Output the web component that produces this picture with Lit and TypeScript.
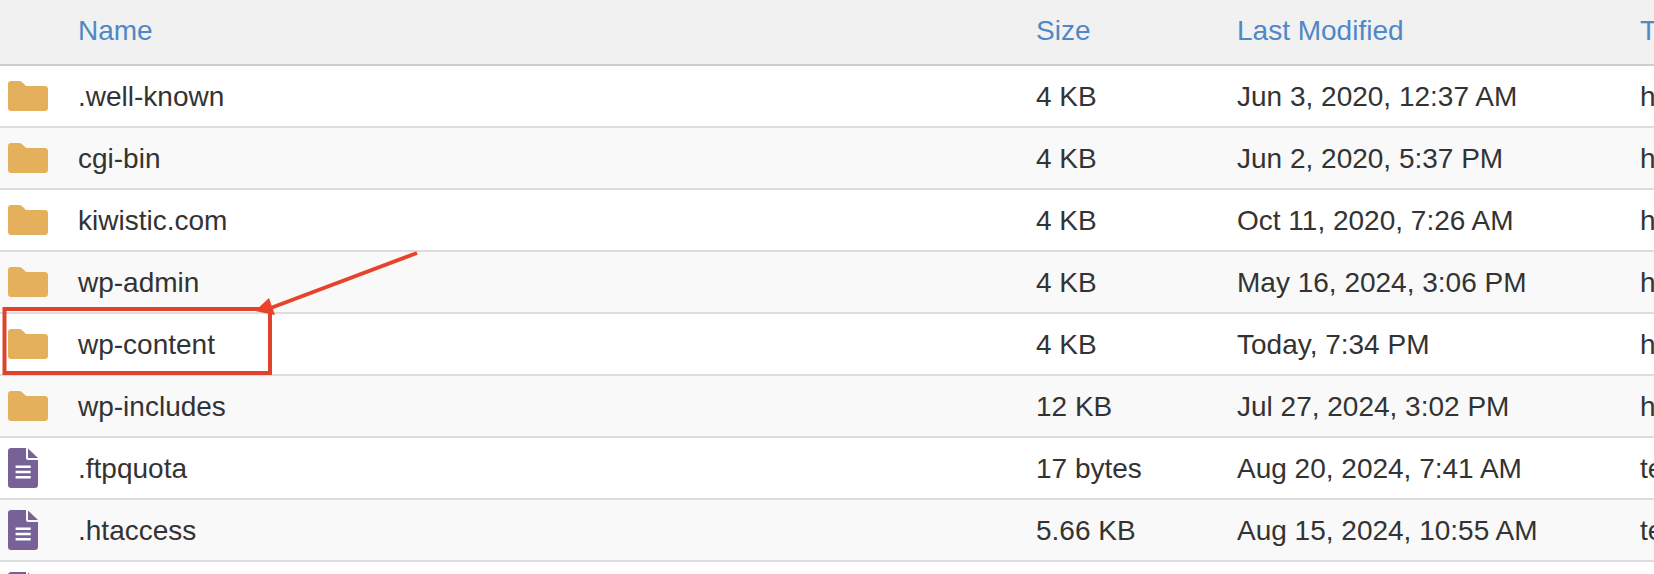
import { LitElement, html, css, svg } from "lit";
import { customElement } from "lit/decorators.js";

type Row = { kind: "folder" | "file"; name: string; size: string; mod: string; type: string };

const rows: Row[] = [
  { kind: "folder", name: ".well-known", size: "4 KB", mod: "Jun 3, 2020, 12:37 AM", type: "httpd/unix-directory" },
  { kind: "folder", name: "cgi-bin", size: "4 KB", mod: "Jun 2, 2020, 5:37 PM", type: "httpd/unix-directory" },
  { kind: "folder", name: "kiwistic.com", size: "4 KB", mod: "Oct 11, 2020, 7:26 AM", type: "httpd/unix-directory" },
  { kind: "folder", name: "wp-admin", size: "4 KB", mod: "May 16, 2024, 3:06 PM", type: "httpd/unix-directory" },
  { kind: "folder", name: "wp-content", size: "4 KB", mod: "Today, 7:34 PM", type: "httpd/unix-directory" },
  { kind: "folder", name: "wp-includes", size: "12 KB", mod: "Jul 27, 2024, 3:02 PM", type: "httpd/unix-directory" },
  { kind: "file", name: ".ftpquota", size: "17 bytes", mod: "Aug 20, 2024, 7:41 AM", type: "text/x-generic" },
  { kind: "file", name: ".htaccess", size: "5.66 KB", mod: "Aug 15, 2024, 10:55 AM", type: "text/x-generic" },
  { kind: "file", name: "", size: "", mod: "", type: "" },
];

const folder = svg`<svg class="folder" viewBox="0 0 40 30"><path d="M3 0H11C13 0 14 1 15.500 2.500L18 5H37C38.700 5 40 6.300 40 8V27C40 28.700 38.700 30 37 30H3C1.300 30 0 28.700 0 27V3C0 1.300 1.300 0 3 0Z" fill="#e5b05c"/></svg>`;
const file = svg`<svg class="file" viewBox="0 0 30 40"><path d="M3 0H18V10C18 11.100 18.900 12 20 12H30V37C30 38.700 28.700 40 27 40H3C1.300 40 0 38.700 0 37V3C0 1.300 1.300 0 3 0Z" fill="#776298"/><path d="M20 0.500L30 10H20Z" fill="#776298"/><path d="M7.600 18.700H22.700M7.600 24H22.700M7.600 29.300H22.700" stroke="#fff" stroke-width="2.400" fill="none"/></svg>`;

@customElement("app-root")
export class AppRoot extends LitElement {
  static styles = css`
    :host { display: block; width: 1654px; height: 574px; overflow: hidden; position: relative; background: #fff;
      font-family: "Liberation Sans", Arial, sans-serif; font-size: 28px; color: #333; }
    .row { display: grid; grid-template-columns: 78px 958px 201px 403px 1fr; align-items: center; height: 60px; border-bottom: 2px solid #dcdcdc; white-space: nowrap; }
    .row:nth-child(odd) { background: #f9f9f9; }
    .row:nth-child(even) { background: #fff; }
    .cell { padding-top: 1px; }
    .head.head { background: #f1f1f1; height: 62px; padding-bottom: 2px; border-bottom: 2px solid #cdcdcd; color: #4f88c5; }
    .ic { display: flex; padding-left: 8px; }
    .folder { width: 40px; height: 30px; display: block; }
    .file { width: 30px; height: 40px; display: block; }
    .overlay { position: absolute; left: 0; top: 0; width: 1654px; height: 574px; pointer-events: none; }
  `;

  render() {
    return html`
      <div class="row head"><div></div><div>Name</div><div>Size</div><div>Last Modified</div><div>Type</div></div>
      ${rows.map(
        (r) => html`<div class="row">
          <div class="ic">${r.kind === "folder" ? folder : file}</div>
          <div class="cell">${r.name}</div><div class="cell">${r.size}</div><div class="cell">${r.mod}</div><div class="cell">${r.type}</div>
        </div>`
      )}
      <svg class="overlay" viewBox="0 0 1654 574">
        <rect x="4.500" y="309" width="265.500" height="64" fill="none" stroke="#e0432c" stroke-width="4"/>
        <path d="M417 253L268 309" stroke="#e8432a" stroke-width="4" fill="none"/>
        <path d="M255 311L269 298L275 315Z" fill="#e8432a"/>
      </svg>
    `;
  }
}
